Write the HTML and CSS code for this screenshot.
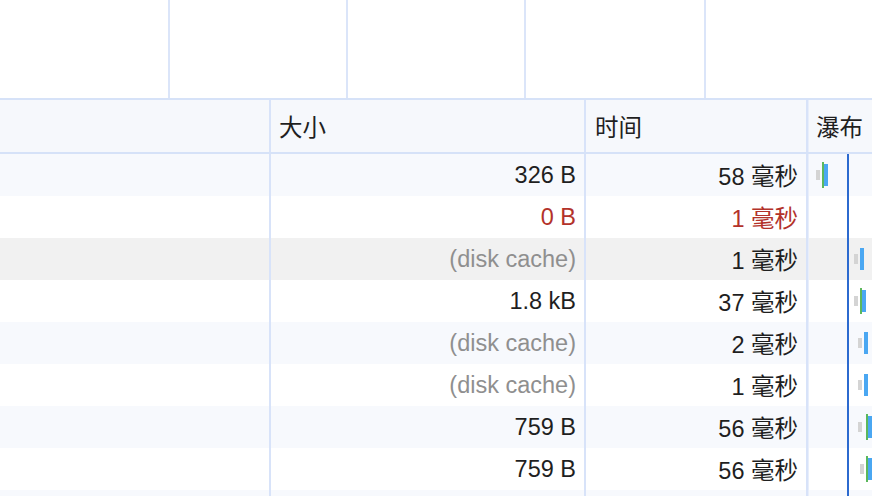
FILE: index.html
```html
<!DOCTYPE html>
<html lang="zh-CN">
<head>
<meta charset="utf-8">
<title>Network</title>
<link rel="stylesheet" href="styles.css">
</head>
<body>
<div class="overview">
  <div class="ov-seg s1"></div>
  <div class="ov-seg s2"></div>
  <div class="ov-seg s3"></div>
  <div class="ov-seg s4"></div>
  <div class="ov-seg s5"></div>
</div>
<div class="grid">
  <div class="row head">
    <div class="cell name"></div>
    <div class="cell size">大小</div>
    <div class="cell time">时间</div>
    <div class="cell wf">瀑布</div>
  </div>
  <div class="body">
    <div class="marker"></div>
    <div class="row light">
      <div class="cell name"></div>
      <div class="cell size num">326 B</div>
      <div class="cell time num">58 毫秒</div>
      <div class="cell wf"><span class="b gray" style="left:8px"></span><span class="b green" style="left:14px"></span><span class="b blue" style="left:16px"></span></div>
    </div>
    <div class="row err">
      <div class="cell name"></div>
      <div class="cell size num">0 B</div>
      <div class="cell time num">1 毫秒</div>
      <div class="cell wf"></div>
    </div>
    <div class="row hover">
      <div class="cell name"></div>
      <div class="cell size num muted">(disk cache)</div>
      <div class="cell time num">1 毫秒</div>
      <div class="cell wf"><span class="b gray" style="left:46px"></span><span class="b blue" style="left:52px"></span></div>
    </div>
    <div class="row">
      <div class="cell name"></div>
      <div class="cell size num">1.8 kB</div>
      <div class="cell time num">37 毫秒</div>
      <div class="cell wf"><span class="b gray" style="left:46px"></span><span class="b green" style="left:52px"></span><span class="b blue" style="left:54px"></span></div>
    </div>
    <div class="row light">
      <div class="cell name"></div>
      <div class="cell size num muted">(disk cache)</div>
      <div class="cell time num">2 毫秒</div>
      <div class="cell wf"><span class="b gray" style="left:50px"></span><span class="b blue" style="left:56px"></span></div>
    </div>
    <div class="row">
      <div class="cell name"></div>
      <div class="cell size num muted">(disk cache)</div>
      <div class="cell time num">1 毫秒</div>
      <div class="cell wf"><span class="b gray" style="left:50px"></span><span class="b blue" style="left:56px"></span></div>
    </div>
    <div class="row light">
      <div class="cell name"></div>
      <div class="cell size num">759 B</div>
      <div class="cell time num">56 毫秒</div>
      <div class="cell wf"><span class="b gray" style="left:50px"></span><span class="b green" style="left:58px"></span><span class="b blue" style="left:60px"></span></div>
    </div>
    <div class="row">
      <div class="cell name"></div>
      <div class="cell size num">759 B</div>
      <div class="cell time num">56 毫秒</div>
      <div class="cell wf"><span class="b gray" style="left:52px"></span><span class="b green" style="left:58px"></span><span class="b blue" style="left:60px"></span></div>
    </div>
    <div class="row light short">
      <div class="cell name"></div>
      <div class="cell size num"></div>
      <div class="cell time num"></div>
      <div class="cell wf"></div>
    </div>
  </div>
</div>
</body>
</html>
```
FILE: styles.css
```css
html, body {
  margin: 0;
  padding: 0;
  background: #ffffff;
  overflow: hidden;
  width: 872px;
  height: 496px;
}
body {
  font-family: "Liberation Sans", "Noto Sans CJK SC", sans-serif;
  font-size: 23.5px;
  color: #1f1f1f;
}
.overview {
  display: flex;
  height: 98px;
  border-bottom: 2px solid #d6e2f8;
}
.ov-seg {
  border-right: 2px solid #dbe5f9;
  flex: none;
}
.s1 { width: 168px; }
.s2 { width: 176px; }
.s3 { width: 176px; }
.s4 { width: 178px; }
.s5 { flex: 1; border-right: none; }

.grid {
  display: flex;
  flex-direction: column;
}
.row {
  display: grid;
  grid-template-columns: 269px 315px 222px 1fr;
  height: 42px;
  background: #ffffff;
}
.row.short { height: 6px; }
.row.light { background: #f7f9fd; }
.row.hover { background: #f1f1f1; }
.row.head {
  height: 52px;
  background: #f6f8fc;
  border-bottom: 2px solid #d6e2f8;
}
.cell {
  display: flex;
  align-items: center;
  white-space: nowrap;
  overflow: hidden;
  padding: 0 8px;
  box-sizing: border-box;
}
.cell.name { padding: 0; }
.cell.size, .cell.time, .cell.wf {
  border-left: 2px solid #d8e3f9;
}
.num { justify-content: flex-end; }
.muted { color: #8f8f8f; }
.err .num { color: #b3322a; }

.cell.wf {
  position: relative;
  padding: 0;
  box-shadow: inset 1px 0 0 #e8eefb;
}
.head .cell.size { padding-left: 8px; }
.head .cell.time { padding-left: 9px; }
.head .cell.wf { padding-left: 8px; }
.body {
  position: relative;
}
.marker {
  position: absolute;
  left: 847px;
  top: 0;
  width: 2px;
  height: 342px;
  background: #2c6acf;
  z-index: 2;
}
.b {
  position: absolute;
  display: block;
}
.b.gray {
  top: 16px;
  width: 4px;
  height: 10px;
  background: #d4d4d4;
}
.b.green {
  top: 8px;
  width: 2px;
  height: 26px;
  background: #5cb85c;
}
.b.blue {
  top: 10px;
  width: 4px;
  height: 22px;
  background: #4aa7f2;
}
```
